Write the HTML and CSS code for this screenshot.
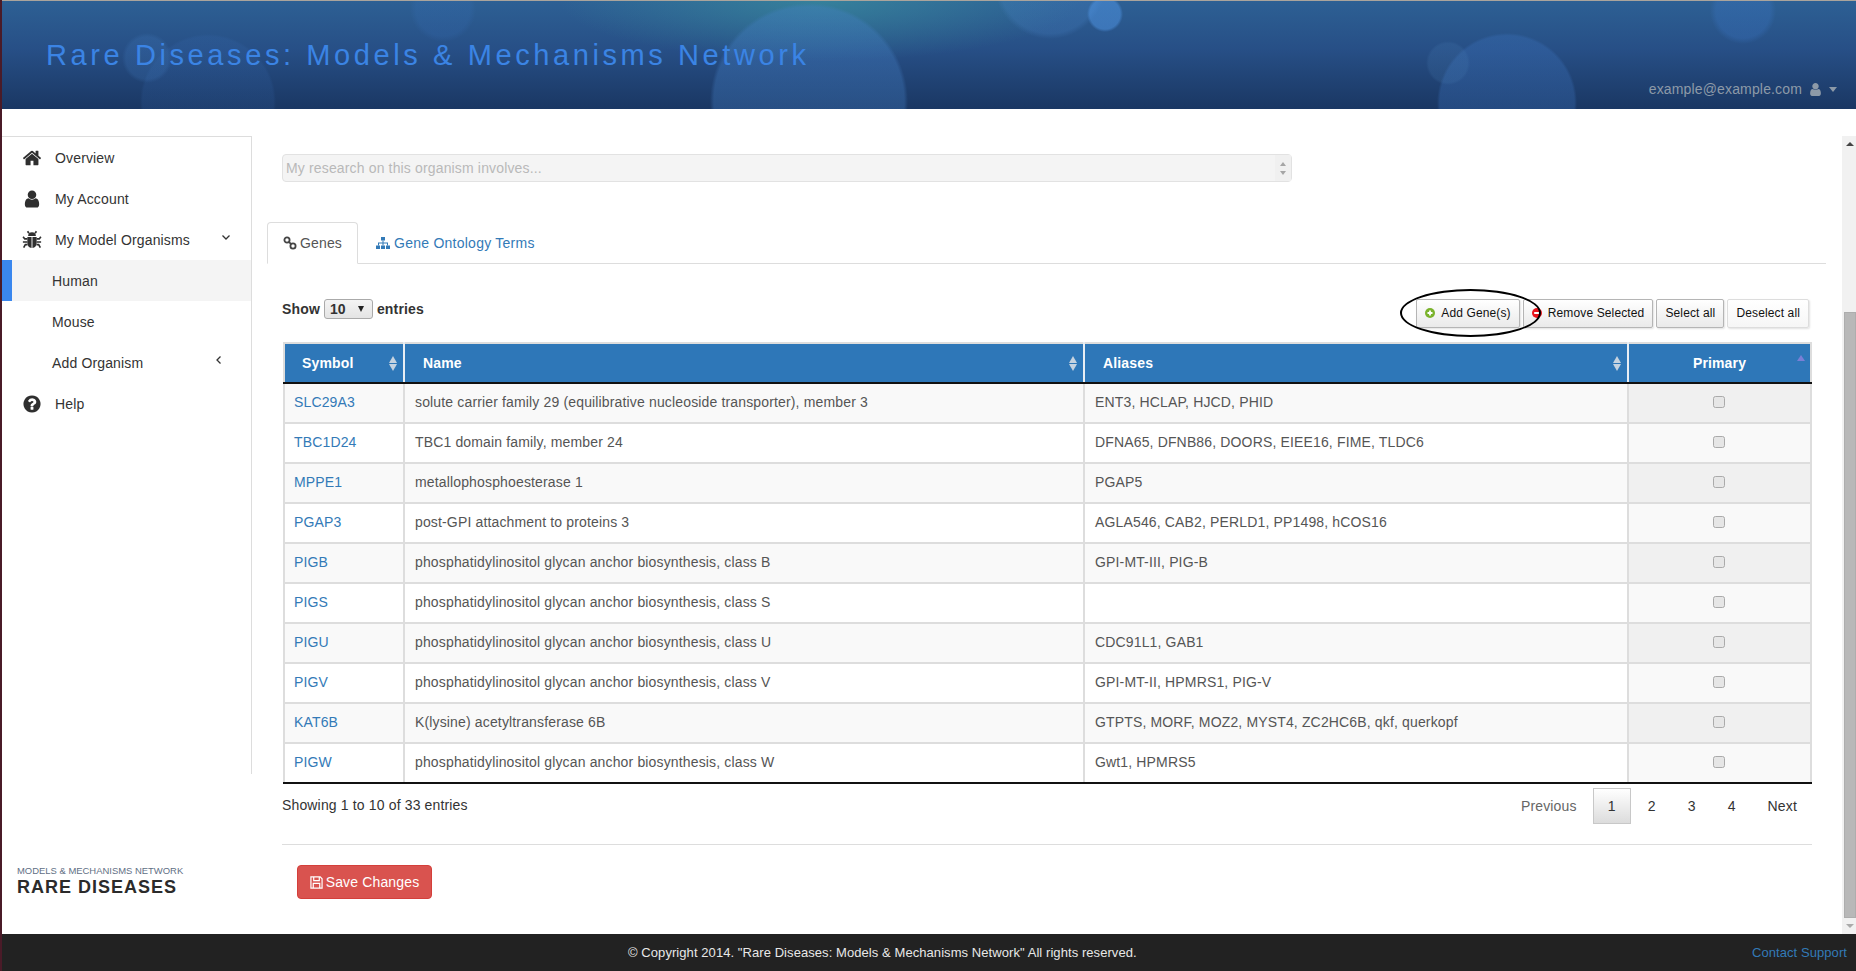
FILE: index.html
```html
<!DOCTYPE html>
<html lang="en">
<head>
<meta charset="utf-8">
<title>Rare Diseases: Models &amp; Mechanisms Network</title>
<link rel="stylesheet" href="styles.css">
</head>
<body>
<header class="masthead">
  <h1 class="site-title">Rare Diseases: Models &amp; Mechanisms Network</h1>
  <div class="user-menu">
    <span>example@example.com</span>
    <svg class="user-icon" viewBox="0 0 1792 1792"><path d="M1536 1399q0 109-62.500 187t-150.500 78h-854q-88 0-150.500-78t-62.500-187q0-85 8.500-160.500t31.500-152 58.500-131 94-89 134.500-34.500q131 128 313 128t313-128q76 0 134.500 34.500t94 89 58.500 131 31.500 152 8.500 160.500zm-256-887q0 159-112.500 271.500t-271.500 112.500-271.500-112.500-112.500-271.500 112.500-271.500 271.500-112.500 271.500 112.500 112.500 271.500z"/></svg>
    <span class="user-caret"></span>
  </div>
</header>
<div class="shell">
  <aside class="sidebar">
    <nav class="side-nav">
      <a class="nav-item"><svg class="nav-icon" viewBox="0 0 1792 1792"><path d="M1472 992v480q0 26-19 45t-45 19h-384v-384h-256v384h-384q-26 0-45-19t-19-45v-480q0-1 .5-3t.5-3l575-474 575 474q1 2 1 6zm223-69l-62 74q-8 9-21 11h-3q-13 0-21-7l-692-577-692 577q-12 8-24 7-13-2-21-11l-62-74q-8-10-7-23.500t11-21.500l719-599q32-26 76-26t76 26l244 204v-195q0-14 9-23t23-9h192q14 0 23 9t9 23v408l219 182q10 8 11 21.500t-7 23.500z"/></svg>Overview</a>
      <a class="nav-item"><svg class="nav-icon tall" viewBox="0 0 1792 1792"><path d="M1536 1399q0 109-62.500 187t-150.500 78h-854q-88 0-150.500-78t-62.500-187q0-85 8.500-160.500t31.500-152 58.500-131 94-89 134.500-34.500q131 128 313 128t313-128q76 0 134.500 34.500t94 89 58.500 131 31.500 152 8.500 160.500zm-256-887q0 159-112.500 271.500t-271.500 112.500-271.500-112.500-112.500-271.500 112.500-271.500 271.500-112.500 271.500 112.500 112.500 271.500z"/></svg>My Account</a>
      <a class="nav-item"><svg class="nav-icon" viewBox="0 0 18 18"><path d="M5.500 5.500a3.500 3.500 0 0 1 7 0z"/><path d="M4.800 6.300h3.800v9.900c-2.300-.2-3.800-2-3.800-4.800zM9.400 6.300h3.800v5.100c0 2.800-1.500 4.600-3.800 4.800z"/><path class="bug-legs" d="M4.800 8H2.500L1 6M13.200 8h2.300L17 6M4.800 10.800H.8M13.200 10.800h4M5 13.200H3l-1.500 2.600M13 13.200h2l1.500 2.600M6.200 3L5 1.200M11.800 3L13 1.200"/></svg>My Model Organisms<svg class="chev chev-down" viewBox="0 0 10 10"><path d="M1.500 3.500L5 7l3.500-3.500"/></svg></a>
      <a class="nav-item sub active">Human</a>
      <a class="nav-item sub">Mouse</a>
      <a class="nav-item sub">Add Organism<svg class="chev chev-left" viewBox="0 0 10 10"><path d="M6.500 1.500L3 5l3.500 3.500"/></svg></a>
      <a class="nav-item"><svg class="nav-icon" viewBox="0 0 1792 1792"><path d="M1024 1376v-192q0-14-9-23t-23-9h-192q-14 0-23 9t-9 23v192q0 14 9 23t23 9h192q14 0 23-9t9-23zm256-672q0-88-55.500-163t-138.500-116-170-41q-243 0-371 213-15 24 8 42l132 100q7 6 19 6 16 0 25-12 53-68 86-92 34-24 86-24 48 0 85.500 26t37.500 59q0 38-20 61t-68 45q-63 28-115.500 86.500t-52.500 125.500v36q0 14 9 23t23 9h192q14 0 23-9t9-23q0-19 21.500-49.500t54.500-49.500q32-18 49-28.500t46-35 44.500-48 28-60.500 12.500-81zm384 192q0 209-103 385.500t-279.500 279.500-385.500 103-385.500-103-279.500-279.500-103-385.500 103-385.500 279.500-279.500 385.500-103 385.500 103 279.500 279.500 103 385.500z"/></svg>Help</a>
    </nav>
    <div class="side-logo">
      <div class="logo-small">MODELS &amp; MECHANISMS NETWORK</div>
      <div class="logo-big">RARE DISEASES</div>
    </div>
  </aside>
  <main class="content">
    <div class="research-box">
      <span>My research on this organism involves...</span>
      <span class="spin"><i class="spin-up"></i><i class="spin-down"></i></span>
    </div>
    <div class="tabs">
      <a class="tab active"><svg class="tab-icon" viewBox="0 0 14 14"><circle class="ring" cx="4" cy="4" r="2.600"/><circle class="ring" cx="10" cy="10" r="2.600"/><path class="ring" d="M5.800 5.800l2.400 2.400"/></svg>Genes</a>
      <a class="tab"><svg class="tab-icon blue" viewBox="0 0 14 14"><rect x="5" y="1" width="4" height="3.500"/><rect x="0" y="9.500" width="4" height="3.500"/><rect x="5" y="9.500" width="4" height="3.500"/><rect x="10" y="9.500" width="4" height="3.500"/><path d="M6.500 4.500h1V6.500h4.500v3h-1V7.500H7.500v2h-1v-2H3v2H2v-3h4.500z"/></svg>Gene Ontology Terms</a>
    </div>
    <div class="toolbar">
      <div class="length">Show <span class="fake-select">10<i class="sel-arrow"></i></span> entries</div>
      <div class="actions">
        <button class="btn"><svg class="btn-icon" viewBox="0 0 10 10"><circle cx="5" cy="5" r="5" fill="#7ab32c"/><path d="M5 2.500v5M2.500 5h5" stroke="#fff" stroke-width="1.800"/></svg>Add Gene(s)</button>
        <button class="btn"><svg class="btn-icon" viewBox="0 0 10 10"><circle cx="5" cy="5" r="5" fill="#e8141c"/><path d="M2.200 5h5.600" stroke="#fff" stroke-width="2"/></svg>Remove Selected</button>
        <button class="btn">Select all</button>
        <button class="btn btn-light">Deselect all</button>
      </div>
      <div class="highlight-ring"></div>
    </div>
    <table class="genes">
      <colgroup><col class="c1"><col class="c2"><col class="c3"><col class="c4"></colgroup>
      <thead>
        <tr>
          <th>Symbol<span class="sort"><i class="s-up"></i><i class="s-down"></i></span></th>
          <th>Name<span class="sort"><i class="s-up"></i><i class="s-down"></i></span></th>
          <th>Aliases<span class="sort"><i class="s-up"></i><i class="s-down"></i></span></th>
          <th class="center">Primary<i class="sorted-up"></i></th>
        </tr>
      </thead>
      <tbody>
        <tr><td><a>SLC29A3</a></td><td>solute carrier family 29 (equilibrative nucleoside transporter), member 3</td><td>ENT3, HCLAP, HJCD, PHID</td><td class="pick"><input type="checkbox" class="check"></td></tr>
        <tr><td><a>TBC1D24</a></td><td>TBC1 domain family, member 24</td><td>DFNA65, DFNB86, DOORS, EIEE16, FIME, TLDC6</td><td class="pick"><input type="checkbox" class="check"></td></tr>
        <tr><td><a>MPPE1</a></td><td>metallophosphoesterase 1</td><td>PGAP5</td><td class="pick"><input type="checkbox" class="check"></td></tr>
        <tr><td><a>PGAP3</a></td><td>post-GPI attachment to proteins 3</td><td>AGLA546, CAB2, PERLD1, PP1498, hCOS16</td><td class="pick"><input type="checkbox" class="check"></td></tr>
        <tr><td><a>PIGB</a></td><td>phosphatidylinositol glycan anchor biosynthesis, class B</td><td>GPI-MT-III, PIG-B</td><td class="pick"><input type="checkbox" class="check"></td></tr>
        <tr><td><a>PIGS</a></td><td>phosphatidylinositol glycan anchor biosynthesis, class S</td><td></td><td class="pick"><input type="checkbox" class="check"></td></tr>
        <tr><td><a>PIGU</a></td><td>phosphatidylinositol glycan anchor biosynthesis, class U</td><td>CDC91L1, GAB1</td><td class="pick"><input type="checkbox" class="check"></td></tr>
        <tr><td><a>PIGV</a></td><td>phosphatidylinositol glycan anchor biosynthesis, class V</td><td>GPI-MT-II, HPMRS1, PIG-V</td><td class="pick"><input type="checkbox" class="check"></td></tr>
        <tr><td><a>KAT6B</a></td><td>K(lysine) acetyltransferase 6B</td><td>GTPTS, MORF, MOZ2, MYST4, ZC2HC6B, qkf, querkopf</td><td class="pick"><input type="checkbox" class="check"></td></tr>
        <tr><td><a>PIGW</a></td><td>phosphatidylinositol glycan anchor biosynthesis, class W</td><td>Gwt1, HPMRS5</td><td class="pick"><input type="checkbox" class="check"></td></tr>
      </tbody>
    </table>
    <div class="table-foot">
      <div class="info">Showing 1 to 10 of 33 entries</div>
      <div class="pager">
        <a class="pg prev">Previous</a>
        <a class="pg num current">1</a>
        <a class="pg num">2</a>
        <a class="pg num">3</a>
        <a class="pg num">4</a>
        <a class="pg next">Next</a>
      </div>
    </div>
    <hr class="rule">
    <button class="save"><svg class="save-icon" viewBox="0 0 14 14"><path d="M1 1h10l2 2v10H1zM4 1v4h6V1M3.500 13V8h7v5"/></svg>Save Changes</button>
  </main>
  <div class="scrollbar">
    <span class="sb-btn"><i class="sb-up"></i></span>
    <span class="sb-gap"></span>
    <span class="sb-thumb"></span>
    <span class="sb-btn"><i class="sb-down"></i></span>
  </div>
</div>
<footer class="site-foot">
  <span class="copyright">© Copyright 2014. "Rare Diseases: Models &amp; Mechanisms Network" All rights reserved.</span>
  <a class="contact">Contact Support</a>
</footer>
</body>
</html>
```
FILE: styles.css
```css
* { box-sizing: border-box; }
html, body { height: 971px; }
body {
  margin: 0;
  height: 971px;
  overflow: hidden;
  display: flex;
  flex-direction: column;
  border-left: 2px solid #4a1b28;
  background: #fff;
  color: #333;
  font: 14px/20px "Liberation Sans", Arial, sans-serif;
  letter-spacing: .15px;
}
a { color: inherit; text-decoration: none; }

/* header */
.masthead {
  height: 109px;
  flex: none;
  margin-left: -2px;
  padding: 1px 19px 0 46px;
  display: flex;
  flex-direction: column;
  border-top: 1px solid #aaa49c;
  background:
    radial-gradient(circle 22px at 1448px 62px, rgba(80,135,190,.16) 88%, transparent 100%),
    radial-gradient(circle 18px at 1105px 13px, rgba(80,150,230,.5) 84%, transparent 100%),
    radial-gradient(circle 56px at 1050px -18px, rgba(80,140,210,.22) 90%, transparent 100%),
    radial-gradient(circle 33px at 1743px 10px, rgba(60,120,200,.3) 82%, transparent 100%),
    radial-gradient(circle 33px at 443px 8px, rgba(60,120,200,.16) 82%, transparent 100%),
    radial-gradient(circle 25px at 147px 57px, rgba(70,130,200,.2) 84%, transparent 100%),
    radial-gradient(circle 99px at 809px 101px, rgba(70,130,200,.33) 96%, transparent 100%),
    radial-gradient(circle 70px at 1507px 102px, rgba(60,115,190,.32) 96%, transparent 100%),
    radial-gradient(circle 68px at 208px 101px, rgba(60,115,190,.14) 96%, transparent 100%),
    radial-gradient(ellipse 260px 60px at 820px 0, rgba(60,150,160,.6), transparent 100%),
    linear-gradient(180deg, #2d6094 0%, #274f86 45%, #1a3763 100%);
}
.site-title {
  margin: 34px 0 0;
  font-size: 29px;
  line-height: 38px;
  font-weight: 400;
  letter-spacing: 3.6px;
  color: #3b84e4;
}
.user-menu {
  margin-top: 5px;
  align-self: flex-end;
  display: flex;
  align-items: center;
  color: #8d9aa8;
}
.user-icon { width: 15px; height: 15px; margin-left: 6px; fill: #8d9aa8; }
.user-caret {
  margin-left: 6px;
  border: 4.500px solid transparent;
  border-top: 5px solid #8d9aa8;
  border-bottom: 0;
}

/* shell */
.shell { flex: 1; display: flex; min-height: 0; padding-top: 27px; }

.sidebar { width: 250px; flex: none; display: flex; flex-direction: column; }
.side-nav {
  height: 638px;
  border-top: 1px solid #ddd;
  border-right: 1px solid #ddd;
}
.nav-item {
  height: 41px;
  display: flex;
  align-items: center;
  padding-left: 20px;
  position: relative;
  color: #333;
}
.nav-icon { width: 20px; height: 20px; margin-right: 13px; fill: #2f2f2f; flex: none; }
.nav-icon.tall { height: 22px; }
.bug-legs { fill: none; stroke: #2f2f2f; stroke-width: 1.500; }
.nav-item.sub { padding-left: 50px; }
.nav-item.active {
  background: #f4f4f4;
  border-left: 10px solid #3a87ee;
  padding-left: 40px;
}
.chev { width: 10px; height: 10px; margin-left: auto; fill: none; stroke: #333; stroke-width: 1.300; }
.chev-down { margin-right: 20px; margin-top: -5px; }
.chev-left { margin-right: 27px; margin-top: -5px; }
.side-logo { margin-top: auto; padding: 0 0 36px 15px; letter-spacing: 0; }
.logo-small { font-size: 9.450px; line-height: 13px; color: #5f6f85; }
.logo-big { font-size: 18px; line-height: 21px; font-weight: 700; letter-spacing: 1px; color: #2b2b2b; }

/* main */
.content { flex: 1; min-width: 0; padding: 18px 0 0 30px; }
.research-box {
  width: 1010px;
  height: 28px;
  display: flex;
  align-items: center;
  justify-content: space-between;
  padding-left: 3px;
  background: #f4f4f4;
  border: 1px solid #e2e2e2;
  border-radius: 4px;
  color: #b9b9b9;
}
.spin {
  width: 16px;
  height: 26px;
  display: flex;
  flex-direction: column;
  align-items: center;
  justify-content: center;
  gap: 5px;
  background: #f0f0f0;
}
.spin-up, .spin-down { border: 3.500px solid transparent; }
.spin-up { border-bottom: 4px solid #a5a5a5; border-top: 0; }
.spin-down { border-top: 4px solid #a5a5a5; border-bottom: 0; }

.tabs {
  margin: 40px 16px 0 -15px;
  height: 42px;
  display: flex;
  border-bottom: 1px solid #ddd;
}
.tab {
  height: 42px;
  display: flex;
  align-items: center;
  padding: 0 15px;
  border: 1px solid transparent;
  color: #337ab7;
  letter-spacing: .25px;
}
.tab.active {
  width: 91px;
  background: #fff;
  color: #555;
  border-color: #ddd #ddd #fff;
  border-radius: 4px 4px 0 0;
  letter-spacing: .15px;
}
.tab-icon { width: 14px; height: 14px; margin-right: 3px; flex: none; fill: #337ab7; }
.tab-icon.blue { margin-right: 4px; }
.ring { fill: none; stroke: #444; stroke-width: 1.800; }
.tab + .tab { padding-left: 17px; }

.toolbar {
  position: relative;
  margin-top: 35px;
  width: 1530px;
  height: 29px;
  display: flex;
  justify-content: space-between;
}
.length { font-weight: 700; line-height: 20px; display: flex; align-items: center; height: 20px; gap: 4px; }
.fake-select {
  width: 49px;
  height: 20px;
  display: flex;
  align-items: center;
  justify-content: space-between;
  padding: 0 8px 0 5px;
  background: linear-gradient(#f4f4f4, #e4e4e4);
  border: 1px solid #aaa;
  border-radius: 3px;
}
.sel-arrow { border: 3.500px solid transparent; border-top: 6px solid #222; border-bottom: 0; }
.actions { display: flex; gap: 3px; margin-right: 3px; }
.btn {
  height: 29px;
  padding: 0 8px 1px;
  display: flex;
  align-items: center;
  font: 12px "Liberation Sans", Arial, sans-serif;
  letter-spacing: .13px;
  color: #111;
  background: linear-gradient(#fff, #eaeaea);
  border: 1px solid #b5b5b5;
  border-radius: 2px;
  box-shadow: 1px 1px 2px rgba(0,0,0,.12);
}
.btn-light { border-color: #ddd; background: linear-gradient(#fff, #f6f6f6); }
.btn-icon { width: 10px; height: 10px; margin-right: 6px; flex: none; }
.highlight-ring {
  position: absolute;
  left: 1118px;
  top: -10px;
  width: 141px;
  height: 48px;
  border: 2px solid #000;
  border-radius: 50%;
}

/* table */
.genes {
  margin: 14px 0 0 1px;
  width: 1527px;
  table-layout: fixed;
  border-collapse: collapse;
  color: #555;
}
.c1 { width: 120px; }
.c2 { width: 680px; }
.c3 { width: 544px; }
.c4 { width: 183px; }
.genes th {
  position: relative;
  height: 40px;
  padding: 0 18px;
  text-align: left;
  background: #2e77b8;
  color: #fff;
  border: 2px solid #ddd;
  border-bottom: 2px solid #111;
  border-right-color: #e8eef4;
}
.genes th:first-child { padding-left: 17px; }
.genes th.center { text-align: center; border-right-color: #ddd; }
.genes td {
  height: 40px;
  padding: 0 9px 2px 10px;
  border: 2px solid #ddd;
  white-space: nowrap;
}
.genes td:first-child { padding-left: 9px; }
.genes tbody tr:nth-child(odd) td { background: #f9f9f9; }
.genes tbody tr:nth-child(odd) td.pick { background: #f0f0f0; }
.genes tbody tr:nth-child(even) td.pick { background: #f9f9f9; }
.genes tbody tr:last-child td { border-bottom: 2px solid #111; }
.genes td a { color: #337ab7; }
.genes td.pick { text-align: center; padding: 0 2px 2px 0; }
.check {
  appearance: none;
  display: inline-block;
  margin: 5px 0 0;
  width: 12px;
  height: 12px;
  background: #e6e6e6;
  border: 1px solid #aaa;
  border-radius: 2.500px;
}
.sort {
  position: absolute;
  right: 6px;
  top: 12px;
  display: flex;
  flex-direction: column;
  gap: 1px;
}
.s-up, .s-down { border: 4.500px solid transparent; }
.s-up { border-bottom: 7px solid #c6d3e0; border-top: 0; }
.s-down { border-top: 7px solid #c6d3e0; border-bottom: 0; }
.sorted-up {
  position: absolute;
  right: 5px;
  top: 11px;
  border: 4px solid transparent;
  border-bottom: 6px solid #7a7fd6;
  border-top: 0;
}

.table-foot {
  width: 1530px;
  height: 60px;
  display: flex;
  justify-content: space-between;
  padding-top: 4px;
}
.info { padding-top: 7px; }
.pager { display: flex; align-items: flex-start; margin-right: 2px; }
.pg { height: 36px; display: flex; align-items: center; justify-content: center; }
.prev { color: #666; margin-right: 16px; }
.num { width: 38px; margin-right: 2px; }
.current { background: linear-gradient(#fff, #dcdcdc); border: 1px solid #c8c8c8; }
.next { margin-left: 15px; margin-right: 13px; }

.rule { margin: 0; width: 1530px; height: 0; border: 0; border-top: 1px solid #ddd; }
.save {
  margin: 20px 0 0 15px;
  width: 135px;
  height: 34px;
  padding: 0;
  display: flex;
  align-items: center;
  justify-content: center;
  color: #fff;
  font: 14px "Liberation Sans", Arial, sans-serif;
  letter-spacing: .15px;
  background: #d9534f;
  border: 1px solid #d43f3a;
  border-radius: 4px;
}
.save-icon { width: 13px; height: 13px; margin-right: 3px; fill: none; stroke: #fff; stroke-width: 1.300; }

/* scrollbar */
.scrollbar { width: 14px; flex: none; display: flex; flex-direction: column; background: #f1f1f1; padding-left: 2px; }
.sb-btn { height: 16px; flex: none; display: flex; align-items: center; justify-content: center; }
.sb-gap { height: 160px; flex: none; }
.sb-thumb { flex: 1; background: #b8b8b8; border: 1px solid #adadad; }
.sb-up { border: 4px solid transparent; border-bottom: 4px solid #444; border-top: 0; }
.sb-down { border: 4px solid transparent; border-top: 4px solid #aaa; border-bottom: 0; }

/* footer */
.site-foot {
  height: 37px;
  flex: none;
  margin-left: 0;
  display: flex;
  align-items: center;
  justify-content: space-between;
  padding: 0 9px 0 626px;
  background: #222;
  font-size: 13px;
  letter-spacing: .07px;
  color: #e8e8e8;
}
.contact { color: #337ab7; }
```
